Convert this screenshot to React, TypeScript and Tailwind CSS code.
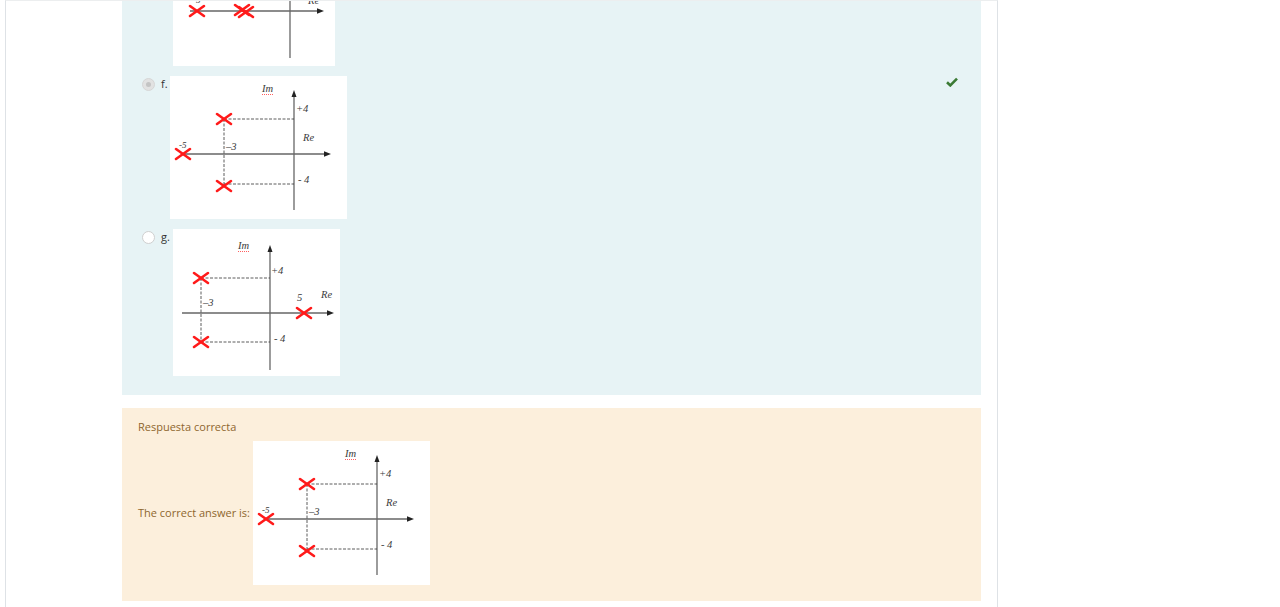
import React from "react";

const serif = "'Liberation Serif', serif";

function Cross({ x, y }: { x: number; y: number }) {
  return (
    <g stroke="#ff1a1a" strokeWidth={2.6} strokeLinecap="round">
      <line x1={x - 7} y1={y - 5} x2={x + 7} y2={y + 5} />
      <line x1={x - 7} y1={y + 5} x2={x + 7} y2={y - 5} />
    </g>
  );
}

function Label({ x, y, children, size = 10.5 }: { x: number; y: number; children: React.ReactNode; size?: number }) {
  return (
    <text x={x} y={y} fontFamily={serif} fontStyle="italic" fontSize={size} fill="#3a3a3a">
      {children}
    </text>
  );
}

function ImLabel({ x, y }: { x: number; y: number }) {
  return (
    <g>
      <Label x={x} y={y}>Im</Label>
      <line x1={x} y1={y + 2.5} x2={x + 11} y2={y + 2.5} stroke="#ff4d4d" strokeWidth={0.9} strokeDasharray="1 1" />
    </g>
  );
}

// diagram used for option f and the correct answer
function DiagramF({ h = 143 }: { h?: number }) {
  return (
    <svg width="177" height={h} viewBox={`0 0 177 ${h}`} className="block">
      <rect width="177" height={h} fill="#fff" />
      <ImLabel x={92} y={16} />
      <line x1={124} y1={19} x2={124} y2={134} stroke="#666" strokeWidth={1.3} />
      <polygon points="124,14 121.5,21 126.5,21" fill="#222" />
      <line x1={15} y1={78} x2={155} y2={78} stroke="#666" strokeWidth={1.3} />
      <polygon points="161,78 154,75.3 154,80.7" fill="#222" />
      <g stroke="#333" strokeWidth={0.8} strokeDasharray="3 1.5">
        <line x1={54} y1={43} x2={54} y2={110} />
        <line x1={54} y1={43} x2={124} y2={43} />
        <line x1={54} y1={108} x2={124} y2={108} />
      </g>
      <Cross x={13} y={78} />
      <Cross x={54} y={43} />
      <Cross x={54} y={110} />
      <Label x={126} y={36}>+4</Label>
      <Label x={133} y={65}>Re</Label>
      <Label x={9} y={72} size={9}>-5</Label>
      <Label x={56} y={74}>–3</Label>
      <Label x={128} y={107}>- 4</Label>
    </svg>
  );
}

function DiagramG() {
  return (
    <svg width="167" height="147" viewBox="0 0 167 147" className="block">
      <rect width="167" height="147" fill="#fff" />
      <ImLabel x={65} y={20} />
      <line x1={97} y1={21} x2={97} y2={141} stroke="#666" strokeWidth={1.3} />
      <polygon points="97,16 94.5,23 99.5,23" fill="#222" />
      <line x1={9} y1={84} x2={155} y2={84} stroke="#666" strokeWidth={1.3} />
      <polygon points="161,84 154,81.3 154,86.7" fill="#222" />
      <g stroke="#333" strokeWidth={0.8} strokeDasharray="3 1.5">
        <line x1={28} y1={49} x2={28} y2={113} />
        <line x1={28} y1={49} x2={97} y2={49} />
        <line x1={28} y1={113} x2={97} y2={113} />
      </g>
      <Cross x={28} y={49} />
      <Cross x={28} y={113} />
      <Cross x={131} y={84} />
      <Label x={98} y={45}>+4</Label>
      <Label x={124} y={72}>5</Label>
      <Label x={148} y={69}>Re</Label>
      <Label x={30} y={77}>–3</Label>
      <Label x={101} y={113}>- 4</Label>
    </svg>
  );
}

function DiagramTop() {
  return (
    <svg width="162" height="65" viewBox="0 0 162 65" className="block">
      <rect width="162" height="65" fill="#fff" />
      <line x1={117} y1={0} x2={117} y2={57} stroke="#666" strokeWidth={1.3} />
      <line x1={17} y1={10} x2={145} y2={10} stroke="#666" strokeWidth={1.3} />
      <polygon points="151,10 144,7.3 144,12.7" fill="#222" />
      <Cross x={24} y={10} />
      <Cross x={69} y={9} />
      <Cross x={73} y={11} />
      <Label x={20} y={2} size={9}>-5</Label>
      <Label x={135} y={3}>Re</Label>
    </svg>
  );
}

function Radio({ checked }: { checked?: boolean }) {
  return checked ? (
    <div className="w-[13px] h-[13px] shrink-0 rounded-full bg-[#e2e2e2] border border-[#d6d6d6] flex items-center justify-center">
      <div className="w-[5px] h-[5px] rounded-full bg-[#c4c4c4]" />
    </div>
  ) : (
    <div className="w-[13px] h-[13px] shrink-0 rounded-full bg-white border border-[#cfcfcf]" />
  );
}

export default function App() {
  return (
    <div className="w-[1280px] h-[607px] overflow-hidden bg-white font-['Open_Sans',sans-serif] text-[11px] text-[#333]">
      <div className="flex">
        <div className="w-[5px] shrink-0" />
        <div className="w-[993px] h-[607px] shrink-0 border-x border-[#dee2e6] border-t border-t-[#eceeef] pl-[116px] pr-[16px]">
          <div className="bg-[#e7f3f5] pb-[19px]">
            <div className="pl-[51px]">
              <DiagramTop />
            </div>
            <div className="flex items-start mt-[10px] pl-[20px] pr-[23px]">
              <div className="mt-[2px] shrink-0"><Radio checked /></div>
              <span className="ml-[6px] leading-[16px]">f.</span>
              <div className="ml-[2px]"><DiagramF /></div>
              <svg className="ml-auto mt-[1px]" width="12" height="10" viewBox="0 0 12 10">
                <path d="M1 5.2 L4.3 8.4 L11 1.6" fill="none" stroke="#3b7a34" strokeWidth="2.6" />
              </svg>
            </div>
            <div className="flex items-start mt-[10px] pl-[20px]">
              <div className="mt-[2px] shrink-0"><Radio /></div>
              <span className="ml-[6px] leading-[16px]">g.</span>
              <div className="ml-[3px]"><DiagramG /></div>
            </div>
          </div>
          <div className="mt-[13px] bg-[#fcefdc] text-[#8e662e] pl-[16px] pt-[11px] pb-[16px]">
            <div className="leading-[16px]">Respuesta correcta</div>
            <div className="flex items-center mt-[6px]">
              <span>The correct answer is:</span>
              <div className="ml-[3px]"><DiagramF h={144} /></div>
            </div>
          </div>
        </div>
      </div>
    </div>
  );
}
